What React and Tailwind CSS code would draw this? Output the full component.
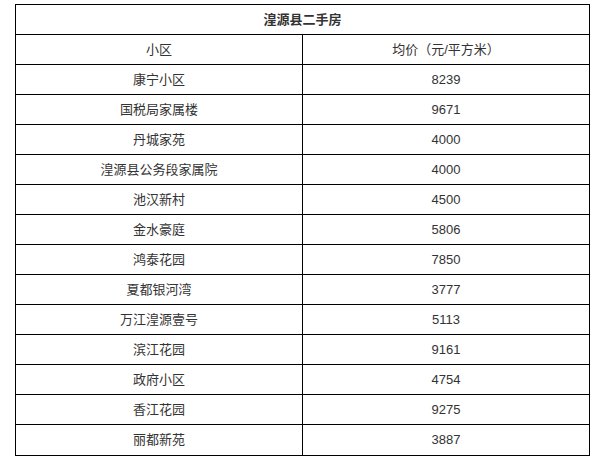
import React from 'react';

const rows = [
    ['康宁小区', '8239'],
    ['国税局家属楼', '9671'],
    ['丹城家苑', '4000'],
    ['湟源县公务段家属院', '4000'],
    ['池汉新村', '4500'],
    ['金水豪庭', '5806'],
    ['鸿泰花园', '7850'],
    ['夏都银河湾', '3777'],
    ['万江湟源壹号', '5113'],
    ['滨江花园', '9161'],
    ['政府小区', '4754'],
    ['香江花园', '9275'],
    ['丽都新苑', '3887'],
];

const font = { fontFamily: '"Liberation Sans", "Noto Sans CJK SC", sans-serif' };

const Row = ({ left, right, last }) => (
    <div className={`grid grid-cols-[287px_1fr] h-[30px] ${last ? 'h-[29px]' : 'border-b border-black'}`}>
        <div className="flex items-center justify-center border-r border-black">{left}</div>
        <div className="flex items-center justify-center">{right}</div>
    </div>
);

const App = () => {
    return (
        <div className="w-[604px] h-[470px] bg-white pt-[4px] pl-[15px]" style={font}>
            <div className="w-[575px] border border-black text-[13px] text-[#333]">
                <div className="h-[30px] border-b border-black flex items-center justify-center font-bold">
                    湟源县二手房
                </div>
                <Row left="小区" right="均价（元/平方米）" />
                {rows.map(([name, price], i) => (
                    <Row key={name} left={name} right={price} last={i === rows.length - 1} />
                ))}
            </div>
        </div>
    );
};

export default App;
